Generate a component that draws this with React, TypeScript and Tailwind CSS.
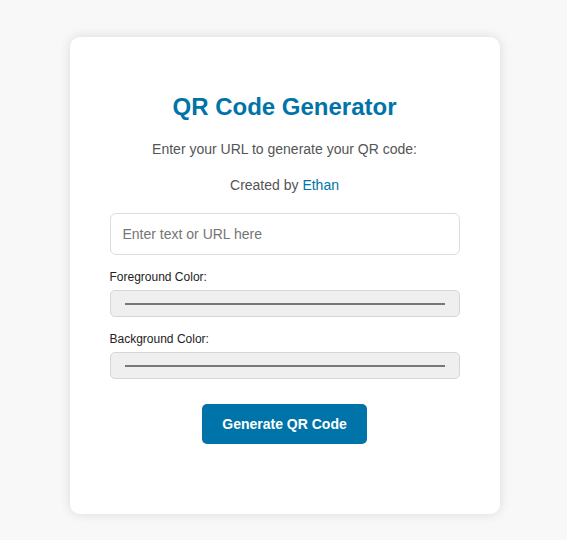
import React from 'react';

const ColorField = ({ label }: { label: string }) => (
  <div className="mt-[15px]">
    <label className="block text-[12px] leading-[14px] text-[#222]">{label}</label>
    <div className="mt-[6px] h-[27px] w-full rounded-[5px] border border-[#d6d6d6] bg-[#efefef] px-[14px] flex items-center">
      <div className="h-[2px] w-full bg-[#777]" />
    </div>
  </div>
);

const App = () => {
  return (
    <div
      className="min-h-[540px] w-full bg-[#f8f8f8] pt-[37px] pl-[2px]"
      style={{ fontFamily: '"Liberation Sans", Arial, sans-serif' }}
    >
      <div className="mx-auto w-[430px] h-[477px] rounded-[10px] bg-white px-10 pt-[56px] shadow-[0_0_12px_rgba(0,0,0,0.12)]">
        <h1 className="text-center text-[24px] font-bold leading-[28px] text-[#0073a8]">
          QR Code Generator
        </h1>
        <p className="mt-[17px] text-center text-[14px] leading-[22px] text-[#555]">
          Enter your URL to generate your QR code:
        </p>
        <p className="mt-[14px] text-center text-[14px] leading-[22px] text-[#555]">
          Created by <span className="text-[#0073a8]">Ethan</span>
        </p>

        <input
          type="text"
          placeholder="Enter text or URL here"
          className="mt-[17px] block h-[42px] w-full rounded-[6px] border border-[#ddd] px-3 text-[14px] text-[#333] placeholder:text-[#757575] outline-none"
        />

        <ColorField label="Foreground Color:" />
        <ColorField label="Background Color:" />

        <div className="mt-[25px] flex justify-center">
          <button className="h-[40px] w-[165px] rounded-[5px] bg-[#0073a8] text-[14px] font-bold text-white">
            Generate QR Code
          </button>
        </div>
      </div>
    </div>
  );
};

export default App;
